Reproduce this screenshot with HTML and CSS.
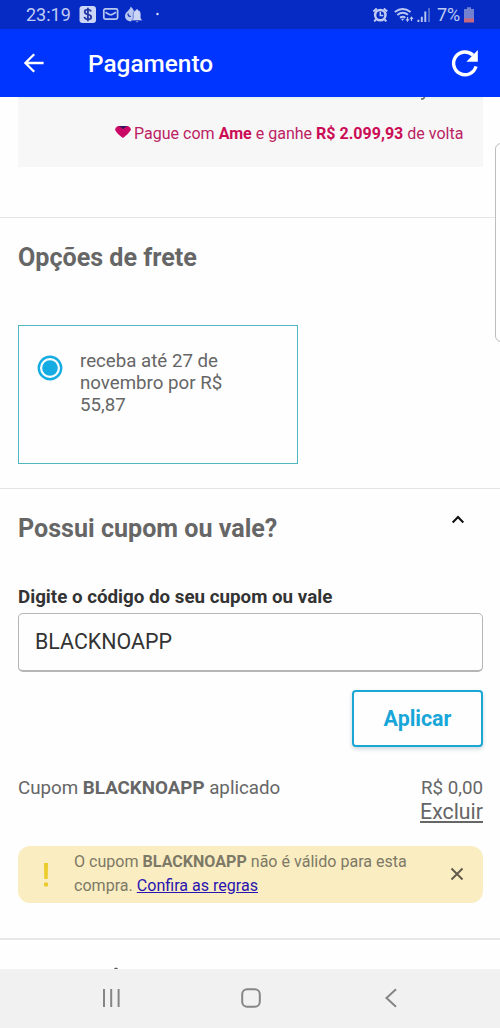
FILE: index.html
```html
<!DOCTYPE html>
<html lang="pt-BR">
<head>
<meta charset="utf-8">
<title>Pagamento</title>
<link rel="stylesheet" href="styles.css">
</head>
<body>
<div class="screen">
  <div class="status">
    <span class="clock">23:19</span>
    <svg class="notifications" width="86" height="20" viewBox="0 0 86 20">
      <rect x="0.5" y="2" width="16.5" height="17" rx="3" fill="#ccd6f8"/>
      <path d="M12 7.6C11.6 6.3 10.4 5.7 8.8 5.7C7 5.7 5.7 6.5 5.7 7.9C5.7 11 12.2 9.6 12.2 12.9C12.2 14.4 10.8 15.3 8.9 15.3C7 15.3 5.7 14.5 5.4 12.9M8.9 3.7V17.3" fill="none" stroke="#2638a4" stroke-width="1.8"/>
      <rect x="24.8" y="4.8" width="13.8" height="10.4" rx="1.6" fill="none" stroke="#b9c8f1" stroke-width="1.7"/>
      <path d="M26.5 8.3L29.8 10.3Q31.7 11.3 33.6 10.3L37 8.3" fill="none" stroke="#b9c8f1" stroke-width="1.6"/>
      <path d="M51.5 2.5C52 6 46 7.5 46 12C46 15.5 49 17.4 52 17.4L54 15.5L55 7.5C54.6 5.5 53.2 3.8 51.5 2.5Z" fill="#b9c8f1"/>
      <path d="M49.2 9.4C48.6 11.4 50 12.8 51.8 12.2" fill="none" stroke="#1530af" stroke-width="1.2"/>
      <path d="M52.5 16.6L54.2 14.2V10.5C54.2 7.8 55.5 6.3 57.1 6V5H58.9V6C60.8 6.5 61.8 8 61.8 10.5V14.2L63.4 16.6ZM56.5 17H59.5L58 18.4Z" fill="#cbd5f8" stroke="#0d2cba" stroke-width=".4"/>
      <circle cx="78.5" cy="10" r="1.2" fill="#dce4ff"/>
    </svg>
    <svg class="signals" width="60" height="22" viewBox="0 0 60 22">
      <circle cx="8.3" cy="11.1" r="5.2" fill="none" stroke="#bfcbf2" stroke-width="2.5"/>
      <path d="M8.3 7.8V11.5H11.3" fill="none" stroke="#bfcbf2" stroke-width="1.5"/>
      <path d="M1.4 7.5L4.8 4.4M11.8 4.4L15.2 7.5M4 15.5L2.2 17.4M12.6 15.5L14.4 17.4" stroke="#bfcbf2" stroke-width="2"/>
      <path d="M22.8 8.1Q30.7 1.7 38.6 8.1M25.3 11Q30.7 6.6 36 10.8M28 13.7Q30.7 11.6 33.3 13.7" fill="none" stroke="#b9c8f1" stroke-width="1.9"/>
      <path d="M29 14.8H32.2L30.6 17Z" fill="#b9c8f1"/>
      <path d="M35.5 13V16M39.5 14V17" stroke="#b9c8f1" stroke-width="1.2"/>
      <path d="M33.5 15.2H37.5L35.5 18ZM37.5 15H41.5L39.5 12.3Z" fill="#b9c8f1"/>
      <path d="M46.4 15.7V18M49.8 12.7V18M53.3 7.5V18" stroke="#b9c8f1" stroke-width="1.9"/>
      <path d="M57 4V18" stroke="#5b75d2" stroke-width="1.7"/>
    </svg>
    <span class="percent">7%</span>
    <svg class="battery" width="12" height="18" viewBox="0 0 12 18">
      <path d="M4 1.3H8V3H11V13H1V3H4Z" fill="#7181cf"/>
      <path d="M1 12.4H11V16.5H1Z" fill="#c9697f"/>
    </svg>
  </div>
  <header class="appbar">
    <svg class="back" width="22" height="22" viewBox="0 0 22 22"><path d="M20.6 11H3M11.2 2.2L2.4 11L11.2 19.8" fill="none" stroke="#fff" stroke-width="2.3"/></svg>
    <h1 class="title">Pagamento</h1>
    <svg class="reload" width="30" height="30" viewBox="0 0 30 30"><path d="M26 18.4A11.4 11.4 0 1 1 23 7.2" fill="none" stroke="#fff" stroke-width="3.4"/><path d="M27.8 2V13.8H16.4Z" fill="#fff"/></svg>
  </header>
  <main class="content">
    <section class="payment">
      <div class="summary">
        <div class="cut-line"><svg width="6" height="3" viewBox="0 0 6 3"><path d="M4.6 0Q4 2 1 2" fill="none" stroke="#666" stroke-width="1.5"/></svg></div>
        <p class="cashback"><svg class="gem" width="18" height="14" viewBox="0 0 18 14"><path d="M4 1H14Q17 2.7 17 4.8Q14.6 9 9 13Q3 9 1 4.8Q1 2.5 4 1Z" fill="#ca0865"/><path d="M5 1H13L9.2 4Z" fill="#32165e"/></svg><span>Pague com <b>Ame</b> e ganhe <b>R$ 2.099,93</b> de volta</span></p>
      </div>
    </section>
    <section class="shipping">
      <h2 class="heading">Opções de frete</h2>
      <div class="option">
        <svg class="radio" width="26" height="26" viewBox="0 0 26 26"><circle cx="13" cy="13" r="11.2" fill="none" stroke="#14ace2" stroke-width="2.4"/><circle cx="13" cy="13" r="7.8" fill="#14ace2"/></svg>
        <p class="option-text">receba até 27 de novembro por R$ 55,87</p>
      </div>
    </section>
    <section class="coupon">
      <div class="coupon-head">
        <h2 class="heading">Possui cupom ou vale?</h2>
        <svg class="chevron" width="14" height="10" viewBox="0 0 14 10"><path d="M1.7 7.4L7 2.1L12.3 7.4" fill="none" stroke="#111" stroke-width="2.1"/></svg>
      </div>
      <div class="label">Digite o código do seu cupom ou vale</div>
      <div class="field">BLACKNOAPP</div>
      <button class="apply">Aplicar</button>
      <div class="applied">
        <p class="applied-name">Cupom <b>BLACKNOAPP</b> aplicado</p>
        <div class="applied-value"><span>R$ 0,00</span><a class="remove">Excluir</a></div>
      </div>
      <div class="alert">
        <svg class="mark" width="6" height="26" viewBox="0 0 6 26"><path d="M1 1H5L4.7 17H1.3Z" fill="#eccb2d"/><rect x="1" y="20.6" width="4" height="4" rx="1" fill="#eccb2d"/></svg>
        <p class="alert-text">O cupom <b>BLACKNOAPP</b> não é válido para esta<br>compra. <a class="rules">Confira as regras</a></p>
        <svg class="close" width="14" height="14" viewBox="0 0 14 14"><path d="M1.5 1.5L12.5 12.5M12.5 1.5L1.5 12.5" stroke="#5f594b" stroke-width="1.9"/></svg>
      </div>
    </section>
    <div class="peek"><svg width="6" height="2" viewBox="0 0 6 2"><path d="M1 2L2 .7H4L5 2Z" fill="#555"/></svg></div>
    <div class="edge-panel"></div>
  </main>
  <nav class="navbar">
    <svg width="20" height="20" viewBox="0 0 20 20"><path d="M3 1V19M10.2 1V19M17.6 1V19" stroke="#858585" stroke-width="2"/></svg>
    <svg width="20" height="20" viewBox="0 0 20 20"><rect x="1.2" y="1.2" width="17.6" height="17.6" rx="5" fill="none" stroke="#858585" stroke-width="2"/></svg>
    <svg width="20" height="20" viewBox="0 0 20 20"><path d="M15 1.3L5.5 10L15 18.7" fill="none" stroke="#858585" stroke-width="2"/></svg>
  </nav>
</div>
</body>
</html>
```
FILE: styles.css
```css
* { box-sizing: border-box; }
body { margin: 0; font-family: Roboto, "Liberation Sans", sans-serif; color: #666; background: #fff; }
h1, h2, p { margin: 0; }
svg { display: block; flex: none; }
.screen { display: flex; flex-direction: column; width: 500px; height: 1028px; overflow: hidden; }
.status { display: flex; height: 29px; padding-left: 26px; background: #062bc5; color: #c0ccf3; font-size: 18px; line-height: 30px; }
.clock { width: 53px; }
.notifications { margin-top: 4px; }
.signals { margin: 4px 0 0 207px; }
.percent { width: 26px; margin-left: 5px; }
.battery { margin-top: 6px; }
.appbar { display: flex; align-items: center; height: 68px; padding: 0 20px 0 23px; background: #0034ff; color: #fff; }
.title { flex: 1; margin-left: 43px; padding-top: 2px; font-size: 24.4px; font-weight: 500; line-height: 30px; }
.content { position: relative; height: 872px; overflow: hidden; background: #fefefe; }
.payment { height: 121px; padding: 0 17px 0 18px; border-bottom: 1px solid #e5e5e5; }
.summary { height: 70px; background: #f7f7f7; border-top: 2px solid #e6f4f6; }
.cut-line { display: flex; height: 23px; padding-left: 402px; margin-top: -2px; }
.cashback { display: flex; padding-left: 96px; color: #bc2263; font-size: 16.05px; line-height: 27px; white-space: nowrap; }
.cashback b { color: #cb0c55; }
.gem { margin: 5px 2px 0 0; }
.shipping { height: 271px; padding: 24px 18px 0; border-bottom: 1px solid #e5e5e5; }
.heading { font-size: 25.1px; font-weight: 700; line-height: 32px; }
.option { display: flex; width: 280px; height: 139px; margin-top: 51px; padding: 24px 60px 0 18px; border: 1px solid #50b7be; }
.radio { margin-top: 5px; }
.option-text { margin-left: 17px; font-size: 18.7px; line-height: 22px; }
.coupon { height: 451px; padding: 24px 17px 0 18px; border-bottom: 2px solid #e8e8e8; }
.coupon-head { display: flex; justify-content: space-between; padding-right: 18px; }
.chevron { margin-top: 2px; }
.label { margin-top: 40px; color: #333; font-size: 18.75px; font-weight: 700; line-height: 24px; }
.field { height: 59px; margin-top: 4px; padding-left: 16px; border: 1px solid #b5b5b5; border-bottom-width: 2px; border-radius: 5px; color: #333; font-size: 21.4px; line-height: 56px; }
.apply { display: block; width: 131px; height: 57px; margin: 18px 0 0 auto; padding: 0; border: 2px solid #1ba7d3; border-radius: 4px; background: #fefefe; box-shadow: 0 2px 4px #ccd5da; color: #18a6d9; font: 700 21.4px/50px Roboto, sans-serif; }
.applied { display: flex; justify-content: space-between; height: 71px; margin-top: 28px; font-size: 18.75px; line-height: 27px; }
.applied-value { display: flex; flex-direction: column; align-items: flex-end; }
.remove { font-size: 21.3px; line-height: 19px; text-decoration: underline; }
.alert { display: flex; height: 57px; padding: 4px 19px 0 25px; border-radius: 12px; background: #faedc1; color: #7d7967; }
.mark { margin-top: 12px; }
.alert-text { flex: 1; margin-left: 25px; font-size: 16.07px; line-height: 24px; white-space: nowrap; }
.rules { color: #2914b2; text-decoration: underline; }
.close { margin-top: 17px; }
.peek { display: flex; align-items: flex-end; height: 29px; padding-left: 113px; }
.edge-panel { position: absolute; top: 46px; right: -10px; width: 15px; height: 199px; border: 1px solid #bdbdbd; border-radius: 6px; background: #fefefe; }
.navbar { display: flex; justify-content: space-between; height: 59px; padding: 19px 99px 0 101px; background: #f1f1f1; }
```
